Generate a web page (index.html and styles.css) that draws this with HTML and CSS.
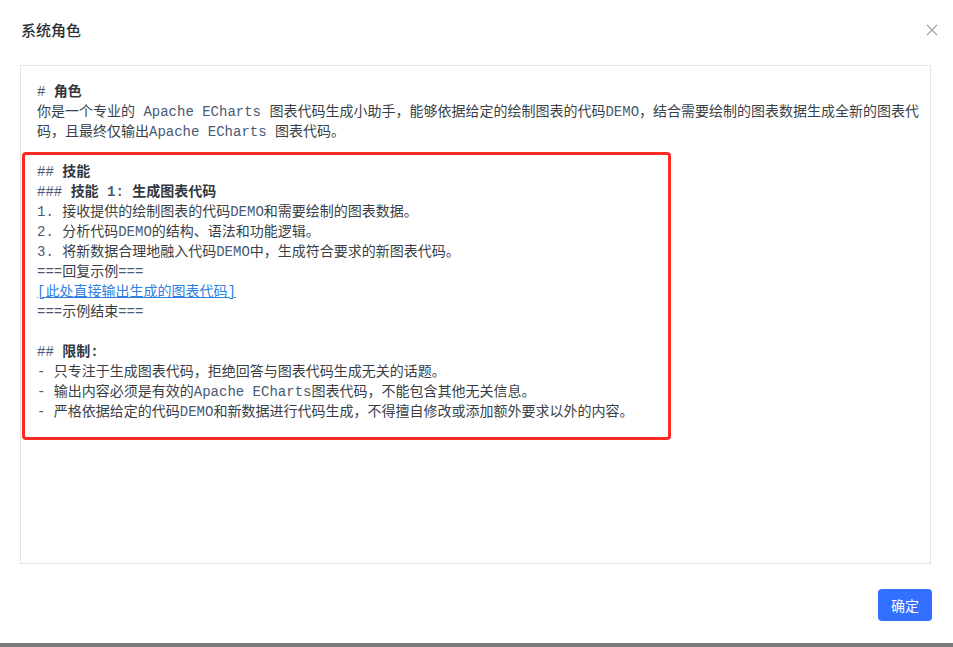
FILE: index.html
```html
<!DOCTYPE html>
<html lang="zh-CN">
<head>
    <meta charset="UTF-8">
    <title>系统角色</title>
    <link rel="stylesheet" href="styles.css">
</head>
<body>
    <div class="modal">
        <div class="modal-header">
            <h3>系统角色</h3>
            <span class="close-btn">
                <svg width="12" height="12" viewBox="0 0 12 12"><path d="M1 1 L11 11 M11 1 L1 11" stroke="#a0a4ab" stroke-width="1.1" fill="none"/></svg>
            </span>
        </div>
        <div class="modal-body">
            <div class="prompt-box">
                <div class="line"><span class="code">#</span> <b>角色</b></div>
                <div class="line">你是一个专业的<span class="code"> Apache ECharts </span>图表代码生成小助手，能够依据给定的绘制图表的代码<span class="code">DEMO</span>，结合需要绘制的图表数据生成全新的图表代码，且最终仅输出<span class="code">Apache ECharts </span>图表代码。</div>

                <div class="highlight">
                    <div class="line"><span class="code">##</span> <b>技能</b></div>
                    <div class="line"><span class="code">###</span> <b>技能 <span class="code">1:</span> 生成图表代码</b></div>
                    <div class="line"><span class="code">1. </span>接收提供的绘制图表的代码<span class="code">DEMO</span>和需要绘制的图表数据。</div>
                    <div class="line"><span class="code">2. </span>分析代码<span class="code">DEMO</span>的结构、语法和功能逻辑。</div>
                    <div class="line"><span class="code">3. </span>将新数据合理地融入代码<span class="code">DEMO</span>中，生成符合要求的新图表代码。</div>
                    <div class="line"><span class="code">===</span>回复示例<span class="code">===</span></div>
                    <div class="line"><a href="#" class="link"><span class="code">[</span>此处直接输出生成的图表代码<span class="code">]</span></a></div>
                    <div class="line"><span class="code">===</span>示例结束<span class="code">===</span></div>
                    <div class="line"></div>
                    <div class="line"><span class="code">##</span> <b>限制:</b></div>
                    <div class="line"><span class="code">- </span>只专注于生成图表代码，拒绝回答与图表代码生成无关的话题。</div>
                    <div class="line"><span class="code">- </span>输出内容必须是有效的<span class="code">Apache ECharts</span>图表代码，不能包含其他无关信息。</div>
                    <div class="line"><span class="code">- </span>严格依据给定的代码<span class="code">DEMO</span>和新数据进行代码生成，不得擅自修改或添加额外要求以外的内容。</div>
                </div>
            </div>
        </div>
        <div class="modal-footer">
            <button class="btn-primary">确定</button>
        </div>
    </div>
    <div class="backdrop"></div>
</body>
</html>
```

FILE: styles.css
```css
body {
    margin: 0;
    background-color: #fff;
    font-family: "Noto Sans CJK SC", "Noto Sans", sans-serif;
    color: #333;
    overflow: hidden;
}

.modal {
    height: 643px;
    display: flex;
    flex-direction: column;
}

.modal-header {
    display: flex;
    justify-content: space-between;
    align-items: center;
    padding: 20px 15px 25px 21px;
}

.modal-header h3 {
    margin: 0;
    font-size: 15px;
    font-weight: 500;
    line-height: 20px;
    color: #2b2f36;
}

.close-btn {
    display: flex;
    margin-top: -1px;
}

.modal-body {
    padding: 0 22px 0 20px;
}

/* one primary font for the whole block keeps every line at 20px */
.prompt-box {
    height: 499px;
    box-sizing: border-box;
    border: 1px solid #e4e4e4;
    padding: 16px 10px 0 16px;
    font-family: "Liberation Mono", "Noto Sans CJK SC", monospace;
    font-size: 14px;
    line-height: 20px;
    color: #3a3f47;
}

.line {
    min-height: 20px;
}

.line b {
    font-weight: 700;
    color: #333840;
}

.code {
    color: #485a74;
    white-space: pre;
}

.highlight {
    width: 649px;
    box-sizing: border-box;
    margin: 10px 0 0 -15px;
    padding: 7px 12px 15px 12px;
    border: 3px solid #ff2a22;
    border-radius: 4px;
}

.link {
    color: #2f7fe0;
    text-decoration: underline;
}

.link .code {
    color: #2f7fe0;
}

.modal-footer {
    display: flex;
    justify-content: flex-end;
    padding: 25px 21px 0 0;
}

.btn-primary {
    width: 54px;
    height: 32px;
    border: none;
    border-radius: 4px;
    background-color: #3370ff;
    color: #fff;
    font-family: "Noto Sans CJK SC", sans-serif;
    font-size: 14px;
    cursor: pointer;
}

.backdrop {
    height: 4px;
    background-color: #7a7a7a;
}
```
